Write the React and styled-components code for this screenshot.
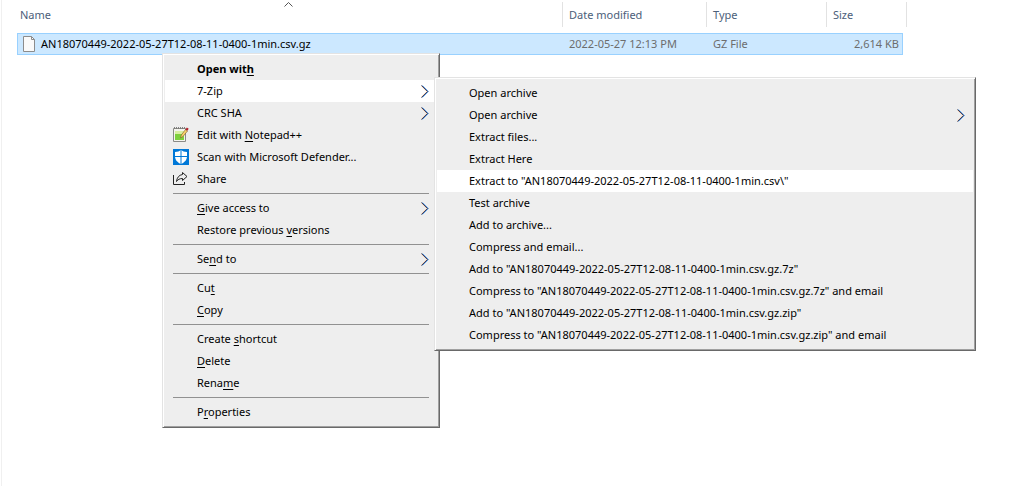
import React from 'react';
import styled, { createGlobalStyle } from 'styled-components';

const FILE_NAME = 'AN18070449-2022-05-27T12-08-11-0400-1min.csv';

// "_" marks the access key of a label
const menuGroups = [
  [
    { label: 'Open wit_h', bold: true },
    { label: '7-Zip', arrow: true, open: true },
    { label: 'CRC SHA', arrow: true },
    { label: 'Edit with _Notepad++', icon: 'notepad' },
    { label: 'Scan with Microsoft Defender...', icon: 'defender' },
    { label: 'Share', icon: 'share' },
  ],
  [
    { label: '_Give access to', arrow: true },
    { label: 'Restore previous _versions' },
  ],
  [{ label: 'Se_nd to', arrow: true }],
  [{ label: 'Cu_t' }, { label: '_Copy' }],
  [{ label: 'Create _shortcut' }, { label: '_Delete' }, { label: 'Rena_me' }],
  [{ label: 'P_roperties' }],
];

const zipItems = [
  { label: 'Open archive' },
  { label: 'Open archive', arrow: true },
  { label: 'Extract files...' },
  { label: 'Extract Here' },
  { label: `Extract to "${FILE_NAME}\\"`, active: true },
  { label: 'Test archive' },
  { label: 'Add to archive...' },
  { label: 'Compress and email...' },
  { label: `Add to "${FILE_NAME}.gz.7z"` },
  { label: `Compress to "${FILE_NAME}.gz.7z" and email` },
  { label: `Add to "${FILE_NAME}.gz.zip"` },
  { label: `Compress to "${FILE_NAME}.gz.zip" and email` },
];

function Chevron() {
  return (
    <svg width="8" height="13" viewBox="0 0 8 13" fill="none" aria-hidden="true">
      <path d="M0 .5 6 6.500 0 12.500" stroke="#f0b070" strokeWidth=".7" />
      <path d="M1.300 .5 7.300 6.500 1.300 12.500" stroke="#3f9cf5" />
      <path d="M.6 .5 6.600 6.500 .6 12.500" stroke="#2a2040" strokeWidth=".9" />
    </svg>
  );
}

function MenuIcon({ name }) {
  if (name === 'notepad') {
    return (
      <svg width="16" height="16" viewBox="0 0 16 16" aria-hidden="true">
        <path d="M.5 1.500h12v13H.5z" fill="#f4f4ee" stroke="#8a8a86" />
        <path d="M1 .8h11" stroke="#555" strokeDasharray="1 1" />
        <path d="M2 4h9v9H2z" fill="#d8efa0" />
        <path d="M2 7h9v6H2z" fill="#7ed03c" />
        <path d="M7.500 11l.8-3L12.500 2.500l2 1.500-4.500 5.500z" fill="#f8cf6a" stroke="#7a5a2a" strokeWidth=".6" />
        <path d="M12.500 2.500l1.300-2 1.900 1.200-1.300 2z" fill="#b3202a" />
      </svg>
    );
  }
  if (name === 'defender') {
    return (
      <svg width="16" height="16" viewBox="0 0 16 16" aria-hidden="true">
        <path d="M0 0h16v16H0z" fill="#0078d7" />
        <path d="M8 1c1.600 1.300 3.400 2 6 2v4c0 4-2.500 6.500-6 8-3.500-1.500-6-4-6-8V3c2.600 0 4.400-.7 6-2z" fill="#fff" />
        <path d="M8 1v14M2 7.500h12" stroke="#0078d7" />
      </svg>
    );
  }
  return (
    <svg width="16" height="16" viewBox="0 0 16 16" fill="none" stroke="#222" aria-hidden="true">
      <path d="M.5 4v9.500h11V11" />
      <path d="M9.500 1.500l4.500 4-4.500 4V7.500C6.500 7.500 5 8.500 3.500 10.500 4 6.500 6 4 9.500 3.500z" />
    </svg>
  );
}

function Label({ text }) {
  const at = text.indexOf('_');
  if (at < 0) return <span>{text}</span>;
  return (
    <span>
      {text.slice(0, at)}
      <u>{text[at + 1]}</u>
      {text.slice(at + 2)}
    </span>
  );
}

function MenuItem({ item, children }) {
  return (
    <ItemWrap role="none">
      <ItemButton
        type="button"
        role="menuitem"
        $active={item.active || item.open}
        $bold={item.bold}
        aria-haspopup={item.arrow ? 'menu' : undefined}
      >
        <IconSlot>{item.icon && <MenuIcon name={item.icon} />}</IconSlot>
        <ItemText>
          <Label text={item.label} />
        </ItemText>
        {item.arrow && <Chevron />}
      </ItemButton>
      {children}
    </ItemWrap>
  );
}

function App() {
  return (
    <>
      <GlobalStyle />
      <Pane>
        <FileTable>
          <colgroup>
            <Col />
            <Col $width="144px" />
            <Col $width="120px" />
            <Col $width="76px" />
            <Col $width="4px" />
          </colgroup>
          <thead>
            <tr>
              <HeadCell aria-sort="ascending">
                Name
                <SortMark width="9" height="5" viewBox="0 0 9 5" aria-hidden="true">
                  <path d="M.5 4.500l4-4 4 4" fill="none" stroke="#555" />
                </SortMark>
              </HeadCell>
              <HeadCell>Date modified</HeadCell>
              <HeadCell>Type</HeadCell>
              <HeadCell colSpan={2}>Size</HeadCell>
            </tr>
          </thead>
          <FileRows>
            <tr>
              <NameCell>
                <FileName>
                  <svg width="12" height="16" viewBox="0 0 12 16" aria-hidden="true">
                    <path d="M.5 .5h8l3 3v12H.5z" fill="#fafafa" stroke="#8c8c8c" />
                    <path d="M8.500 .5v3h3" fill="none" stroke="#8c8c8c" />
                  </svg>
                  {FILE_NAME}.gz
                </FileName>
              </NameCell>
              <Cell>2022-05-27 12:13 PM</Cell>
              <Cell>GZ File</Cell>
              <SizeCell>2,614 KB</SizeCell>
            </tr>
          </FileRows>
        </FileTable>

        <ContextMenu role="menu">
          {menuGroups.map((group, index) => (
            <React.Fragment key={index}>
              {index > 0 && <Separator />}
              {group.map((item) => (
                <MenuItem key={item.label} item={item}>
                  {item.open && (
                    <SubMenu role="menu">
                      {zipItems.map((zipItem, i) => (
                        <MenuItem key={i} item={zipItem} />
                      ))}
                    </SubMenu>
                  )}
                </MenuItem>
              ))}
            </React.Fragment>
          ))}
        </ContextMenu>
      </Pane>
    </>
  );
}

export default App;

const GlobalStyle = createGlobalStyle`
  * {
    box-sizing: border-box;
  }

  body {
    margin: 0;
    background: #fff;
    color: #000;
    font-family: 'Noto Sans', 'Open Sans', sans-serif;
    font-size: 11px;
    line-height: 20px;
  }
`;

const Pane = styled.main`
  position: relative;
  min-height: 100vh;
  margin-left: 1px;
  padding: 2px 103px 0 15px;
  border-left: 1px solid #f0f0f0;
`;

const FileTable = styled.table`
  width: 100%;
  table-layout: fixed;
  border-collapse: separate;
  border-spacing: 0;
`;

const Col = styled.col`
  width: ${({ $width }) => $width || 'auto'};
`;

const HeadCell = styled.th`
  position: relative;
  height: 25px;
  padding: 0 0 0 6px;
  border-right: 1px solid #e2e2e2;
  color: #4c607a;
  font-weight: 400;
  text-align: left;

  &:first-child {
    padding-left: 3px;
  }
`;

const SortMark = styled.svg`
  position: absolute;
  top: 0;
  left: 50%;
  margin-left: -5px;
`;

const FileRows = styled.tbody`
  &::before {
    content: '';
    display: block;
    height: 6px;
  }
`;

const Cell = styled.td`
  height: 22px;
  padding: 0 6px;
  border: solid #99d1ff;
  border-width: 1px 0;
  background: #cce8ff;
  color: #6d6d6d;
  white-space: nowrap;
`;

const NameCell = styled(Cell)`
  padding-left: 5px;
  border-left-width: 1px;
  color: #000;
`;

const SizeCell = styled(Cell)`
  padding-right: 3px;
  border-right-width: 1px;
  text-align: right;
`;

const FileName = styled.div`
  display: flex;
  align-items: center;
  gap: 6px;
`;

const MenuPanel = styled.div`
  position: absolute;
  padding: 4px 2px;
  border: 1px solid;
  border-color: #e3e3e3 #696969 #696969 #e3e3e3;
  background: #eee;
  box-shadow: inset 1px 1px #fff, inset -1px -1px #a0a0a0;
`;

const ContextMenu = styled(MenuPanel)`
  top: 53px;
  left: 160px;
  width: 278px;
`;

const SubMenu = styled(MenuPanel)`
  top: -3px;
  left: 269px;
  width: 542px;
  z-index: 1;
`;

const ItemWrap = styled.div`
  position: relative;
`;

const ItemButton = styled.button`
  display: flex;
  align-items: center;
  width: 100%;
  height: 22px;
  padding: 0 8px;
  border: 0;
  background: ${({ $active }) => ($active ? '#fff' : 'transparent')};
  color: inherit;
  font: inherit;
  font-weight: ${({ $bold }) => ($bold ? 700 : 400)};
  text-align: left;
  white-space: nowrap;
`;

const IconSlot = styled.span`
  display: flex;
  flex: 0 0 24px;
`;

const ItemText = styled.span`
  flex: 1;

  u {
    text-underline-offset: 2px;
  }
`;

const Separator = styled.hr`
  height: 1px;
  margin: 3px 8px;
  border: 0;
  background: #919191;
`;
